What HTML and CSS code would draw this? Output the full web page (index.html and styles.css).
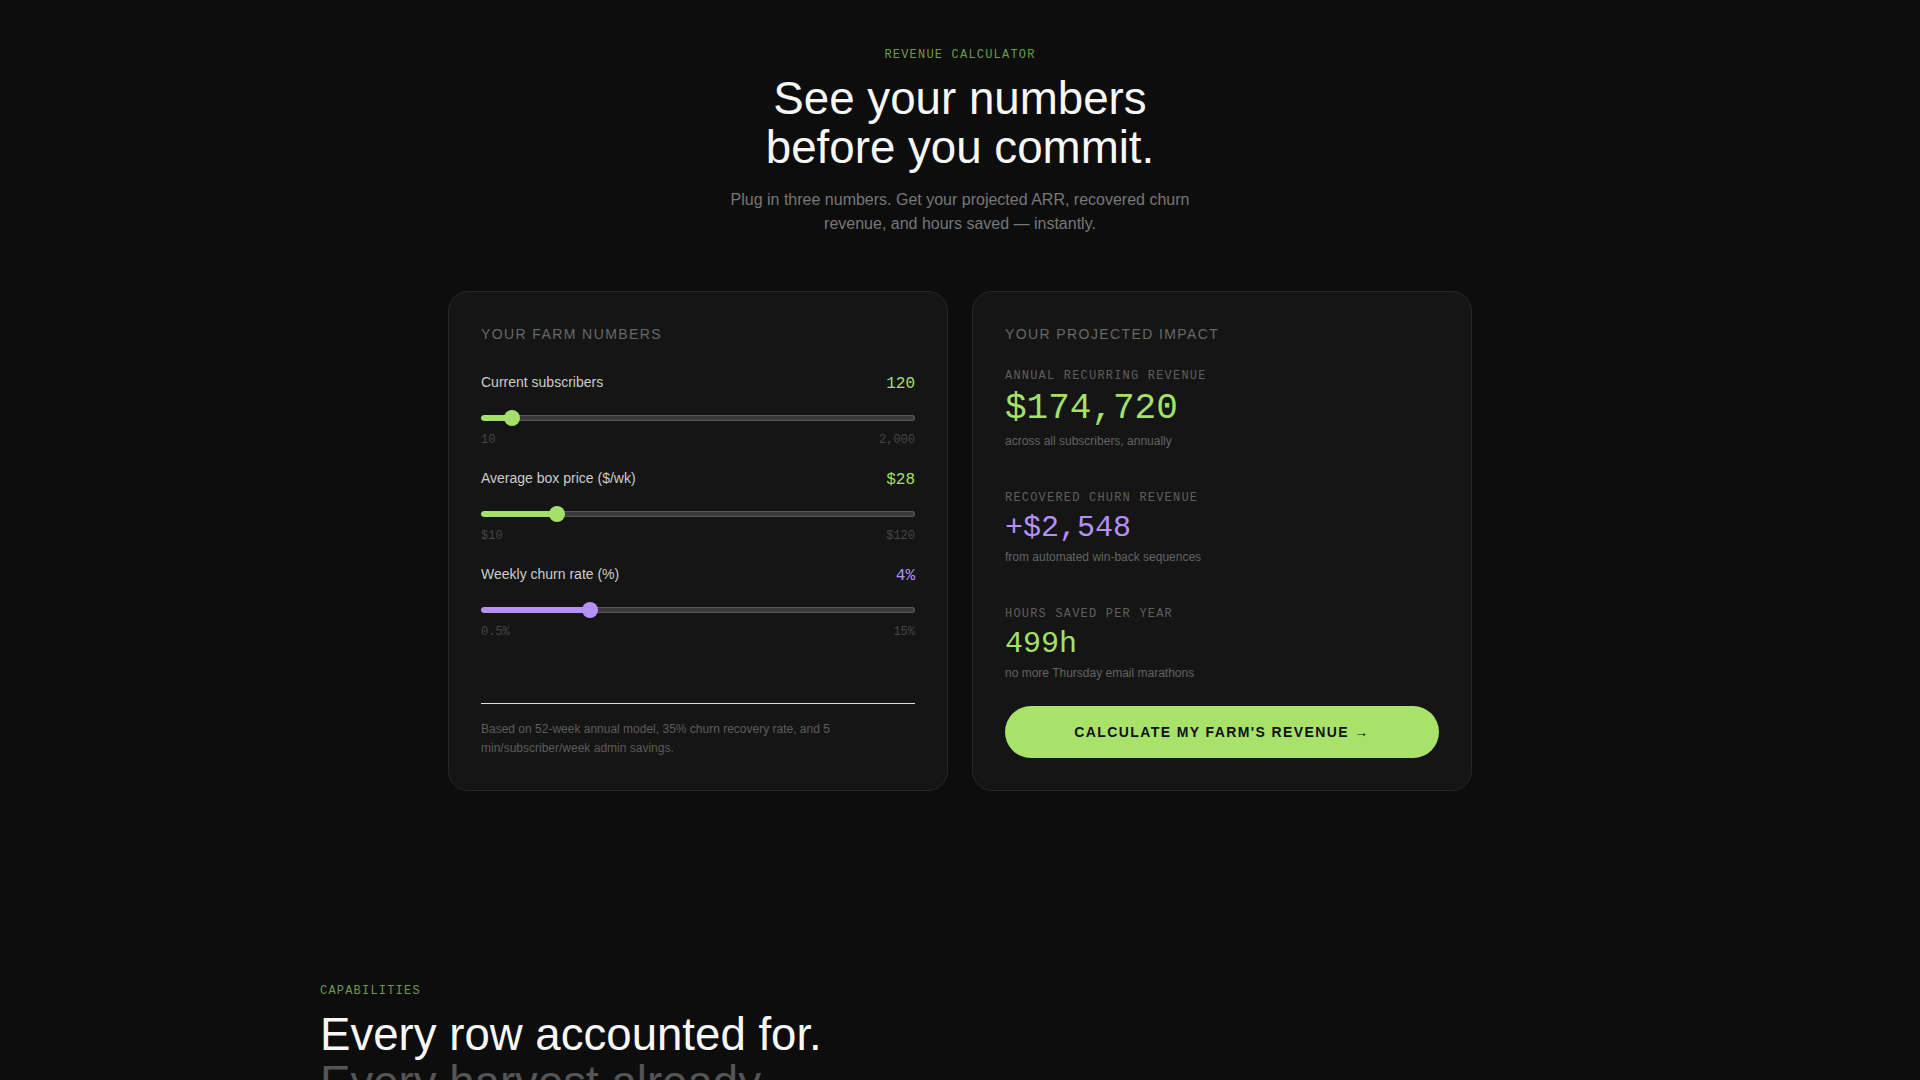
FILE: index.html
```html
<!DOCTYPE html>
<html lang="en">
<head>
<meta charset="utf-8">
<title>Revenue Calculator</title>
<link rel="stylesheet" href="styles.css">
</head>
<body>
<section class="calc">
  <div class="calc-head">
    <div class="eyebrow">REVENUE CALCULATOR</div>
    <h1 class="calc-title">See your numbers<br>before you commit.</h1>
    <p class="calc-sub">Plug in three numbers. Get your projected ARR, recovered churn revenue, and hours saved — instantly.</p>
  </div>
  <div class="calc-grid">
    <div class="card card-inputs">
      <div class="card-title">YOUR FARM NUMBERS</div>
      <div class="fields">
        <div class="field">
          <div class="field-head">
            <span class="field-label">Current subscribers</span>
            <span class="field-value green">120</span>
          </div>
          <div class="slider">
            <div class="slider-track"><div class="slider-fill fill-green" style="width:31px"></div></div>
            <div class="slider-thumb thumb-green" style="left:23px"></div>
          </div>
          <div class="field-range"><span>10</span><span>2,000</span></div>
        </div>
        <div class="field">
          <div class="field-head">
            <span class="field-label">Average box price ($/wk)</span>
            <span class="field-value green">$28</span>
          </div>
          <div class="slider">
            <div class="slider-track"><div class="slider-fill fill-green" style="width:76px"></div></div>
            <div class="slider-thumb thumb-green" style="left:68px"></div>
          </div>
          <div class="field-range"><span>$10</span><span>$120</span></div>
        </div>
        <div class="field">
          <div class="field-head">
            <span class="field-label">Weekly churn rate (%)</span>
            <span class="field-value purple">4%</span>
          </div>
          <div class="slider">
            <div class="slider-track"><div class="slider-fill fill-purple" style="width:109px"></div></div>
            <div class="slider-thumb thumb-purple" style="left:101px"></div>
          </div>
          <div class="field-range"><span>0.5%</span><span>15%</span></div>
        </div>
      </div>
      <p class="footnote">Based on 52-week annual model, 35% churn recovery rate, and 5 min/subscriber/week admin savings.</p>
    </div>
    <div class="card card-results">
      <div class="card-title">YOUR PROJECTED IMPACT</div>
      <div class="metric">
        <div class="metric-label">ANNUAL RECURRING REVENUE</div>
        <div class="metric-value metric-big green">$174,720</div>
        <div class="metric-sub">across all subscribers, annually</div>
      </div>
      <div class="metric">
        <div class="metric-label">RECOVERED CHURN REVENUE</div>
        <div class="metric-value purple">+$2,548</div>
        <div class="metric-sub">from automated win-back sequences</div>
      </div>
      <div class="metric">
        <div class="metric-label">HOURS SAVED PER YEAR</div>
        <div class="metric-value green">499h</div>
        <div class="metric-sub">no more Thursday email marathons</div>
      </div>
      <button class="cta" type="button">CALCULATE MY FARM'S REVENUE →</button>
    </div>
  </div>
</section>
<section class="caps">
  <div class="eyebrow">CAPABILITIES</div>
  <h2 class="caps-title">Every row accounted for.<br><span class="dim">Every harvest already tallied.</span></h2>
</section>
</body>
</html>
```
FILE: styles.css
```css
* { box-sizing: border-box; }

html, body {
  margin: 0;
  padding: 0;
  background: #0d0d0d;
  color: #f2f2f2;
  font-family: "Liberation Sans", Arial, sans-serif;
}

.calc {
  padding-top: 47px;
}

.calc-head {
  text-align: center;
}

.eyebrow {
  font-family: "Liberation Mono", "Courier New", monospace;
  font-size: 12px;
  line-height: 16px;
  letter-spacing: 0.1em;
  color: #6c9a4b;
}

.calc-head .eyebrow {
  margin-bottom: 11px;
}

.calc-title {
  margin: 0;
  font-size: 45.7px;
  line-height: 49px;
  font-weight: 400;
  color: #f7f7f7;
}

.calc-sub {
  margin: 16px auto 0;
  max-width: 480px;
  font-size: 16px;
  line-height: 24px;
  color: #777777;
}

.calc-grid {
  margin: 55px auto 0;
  width: 1024px;
  display: grid;
  grid-template-columns: 500px 500px;
  gap: 24px;
}

.card {
  background: #151515;
  border: 1px solid #262626;
  border-radius: 20px;
  padding: 32px;
  display: flex;
  flex-direction: column;
}

.card-title {
  font-size: 14px;
  line-height: 20px;
  letter-spacing: 0.1em;
  color: #686868;
}

.card-inputs .card-title {
  margin-bottom: 27px;
}

.fields {
  display: flex;
  flex-direction: column;
  gap: 19px;
}

.field-head {
  display: flex;
  justify-content: space-between;
  align-items: center;
  height: 22px;
}

.field-label {
  font-size: 14px;
  line-height: 22px;
  color: #cccccc;
}

.field-value {
  font-family: "Liberation Mono", "Courier New", monospace;
  font-size: 16px;
  line-height: 22px;
  padding-top: 3px;
}

.green { color: #a5e06a; }
.purple { color: #b690f5; }

.slider {
  position: relative;
  height: 16px;
  margin-top: 17px;
  display: flex;
  align-items: center;
}

.slider-track {
  width: 100%;
  height: 6px;
  border-radius: 3px;
  background: #3b3b3b;
  box-shadow: inset 0 0 0 1px #575757;
  overflow: hidden;
}

.slider-fill {
  height: 100%;
  border-radius: 3px;
}

.fill-green { background: #a5e06a; }
.fill-purple { background: #b690f5; }

.slider-thumb {
  position: absolute;
  top: 0;
  width: 16px;
  height: 16px;
  border-radius: 50%;
}

.thumb-green { background: #a5e06a; }
.thumb-purple { background: #b690f5; }

.field-range {
  margin-top: 6px;
  display: flex;
  justify-content: space-between;
  font-family: "Liberation Mono", "Courier New", monospace;
  font-size: 12px;
  line-height: 16px;
  color: #464646;
}

.footnote {
  margin: auto 0 0;
  border-top: 1px solid #dedede;
  padding-top: 16px;
  font-size: 12px;
  line-height: 19.2px;
  color: #5c5c5c;
}

.card-results .card-title {
  margin-bottom: 24px;
}

.metric + .metric {
  margin-top: 41px;
}

.metric-label {
  font-family: "Liberation Mono", "Courier New", monospace;
  font-size: 12px;
  line-height: 16px;
  letter-spacing: 0.1em;
  color: #5f5f5f;
  margin-bottom: 7px;
}

.metric-value {
  font-family: "Liberation Mono", "Courier New", monospace;
  font-size: 30px;
  line-height: 1;
}

.metric-value.metric-big {
  font-size: 36px;
}

.metric-sub {
  margin-top: 6px;
  font-size: 12px;
  line-height: 16px;
  color: #636363;
}

.cta {
  margin-top: 25px;
  height: 52px;
  width: 100%;
  border: none;
  border-radius: 26px;
  background: #a8e26b;
  color: #111111;
  font-family: "Liberation Sans", Arial, sans-serif;
  font-weight: 700;
  font-size: 14px;
  letter-spacing: 0.1em;
  cursor: pointer;
}

.caps {
  width: 1280px;
  margin: 192px auto 0;
}

.caps .eyebrow {
  margin-bottom: 12px;
}

.caps-title {
  margin: 0;
  max-width: 560px;
  font-size: 45.6px;
  line-height: 48px;
  font-weight: 400;
  color: #f7f7f7;
}

.caps-title .dim {
  color: #555555;
}
```
